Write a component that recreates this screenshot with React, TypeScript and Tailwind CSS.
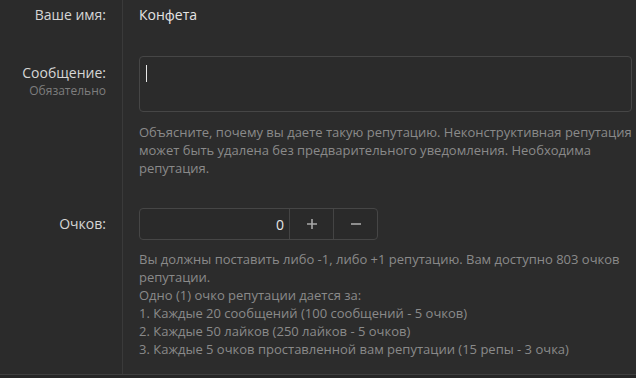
import React from "react";

export default function App() {
  const font = { fontFamily: '"Open Sans", "Noto Sans", sans-serif' };
  return (
    <div style={font} className="w-[636px] h-[378px] bg-[#2c2c2c] flex flex-col overflow-hidden text-[13px]">
      {/* Row 1 */}
      <div className="flex h-[46px]">
        <div className="w-[123px] shrink-0 border-r border-[#3a3a3a] bg-[#2b2b2b] pr-[16px] pt-[6px] text-right text-[14px] leading-[18px] text-[#d6d6d6]">
          Ваше имя:
        </div>
        <div className="flex-1 pl-[16px] pt-[6px] text-[14px] leading-[18px] text-[#e4e4e4]">
          Конфета
        </div>
      </div>
      {/* Row 2 */}
      <div className="flex h-[152px]">
        <div className="w-[123px] shrink-0 border-r border-[#3a3a3a] bg-[#2b2b2b] pr-[16px] pt-[18px] text-right">
          <div className="text-[14px] leading-[18px] text-[#d6d6d6]">Сообщение:</div>
          <div className="mt-[1px] text-[12px] leading-[15px] text-[#7e7e7e]">Обязательно</div>
        </div>
        <div className="flex-1 min-w-0 pl-[16px] pr-[4px] pt-[10px]">
          <div className="h-[56px] rounded-[4px] border border-[#464646] bg-[#2b2b2b] pl-[6px] pt-[8px]">
            <div className="w-[1px] h-[17px] bg-[#e8e8e8]" />
          </div>
          <div className="mt-[11px] w-[500px] leading-[18px] text-[#8a8a8a]">
            Объясните, почему вы даете такую репутацию. Неконструктивная репутация может быть удалена без предварительного уведомления. Необходима репутация.
          </div>
        </div>
      </div>
      {/* Row 3 */}
      <div className="flex h-[176px]">
        <div className="w-[123px] shrink-0 border-r border-[#3a3a3a] bg-[#2b2b2b] pr-[16px] pt-[17px] text-right text-[14px] leading-[18px] text-[#d6d6d6]">
          Очков:
        </div>
        <div className="flex-1 pl-[16px] pr-[4px] pt-[10px]">
          <div className="flex h-[32px] w-[239px] rounded-[4px] border border-[#464646] bg-[#2a2a2a]">
            <div className="w-[149px] flex items-center justify-end pr-[5px] text-[14px] text-[#e6e6e6]">0</div>
            <div className="w-[44px] border-l border-[#444] flex items-center justify-center text-[#a8a8a8]">
              <svg width="12" height="12" viewBox="0 0 12 12"><path d="M6 1v10M1 6h10" stroke="#a8a8a8" strokeWidth="1.6" /></svg>
            </div>
            <div className="flex-1 border-l border-[#444] flex items-center justify-center">
              <svg width="12" height="12" viewBox="0 0 12 12"><path d="M1 6h10" stroke="#a8a8a8" strokeWidth="1.6" /></svg>
            </div>
          </div>
          <div className="mt-[10px] leading-[18px] text-[#8a8a8a]">
            <div>Вы должны поставить либо -1, либо +1 репутацию. Вам доступно 803 очков репутации.</div>
            <div>Одно (1) очко репутации дается за:</div>
            <div>1. Каждые 20 сообщений (100 сообщений - 5 очков)</div>
            <div>2. Каждые 50 лайков (250 лайков - 5 очков)</div>
            <div>3. Каждые 5 очков проставленной вам репутации (15 репы - 3 очка)</div>
          </div>
        </div>
      </div>
      <div className="flex-1 border-t border-[#3e3e3e] bg-[#262626]" />
    </div>
  );
}
